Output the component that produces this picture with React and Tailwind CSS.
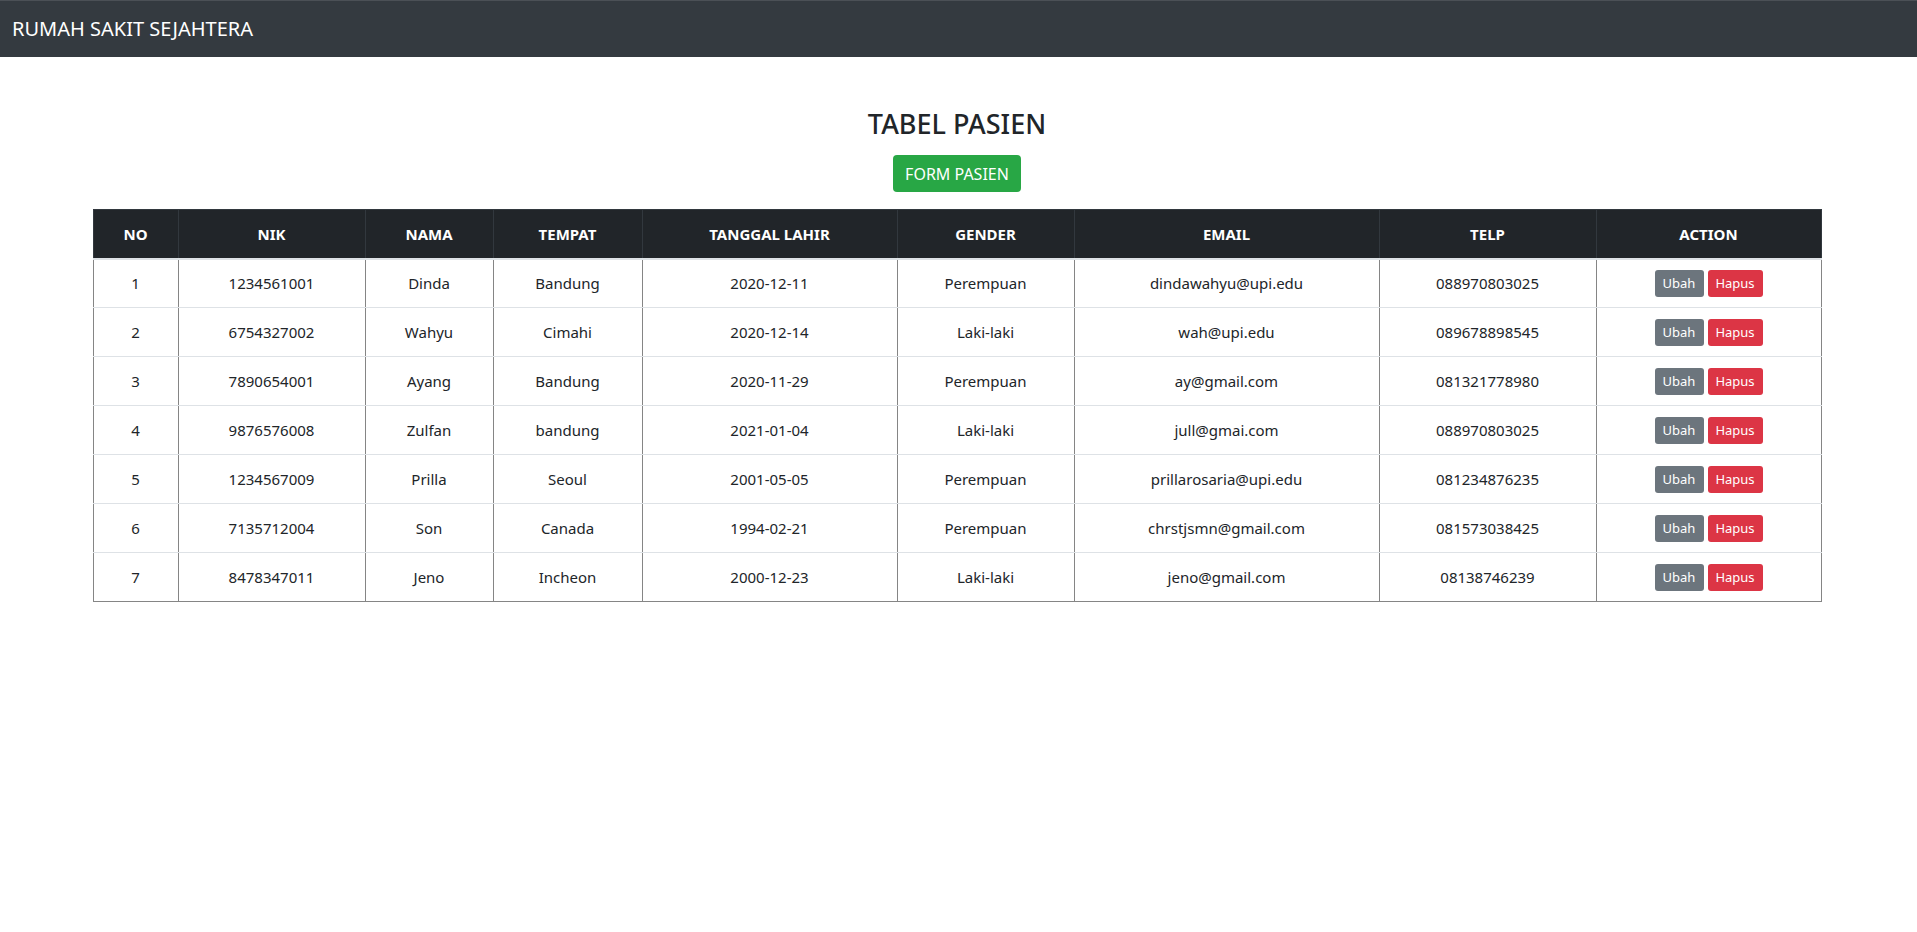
const pasien = [
  { nik: '1234561001', nama: 'Dinda', tempat: 'Bandung', tgl: '2020-12-11', gender: 'Perempuan', email: 'dindawahyu@upi.edu', telp: '088970803025' },
  { nik: '6754327002', nama: 'Wahyu', tempat: 'Cimahi', tgl: '2020-12-14', gender: 'Laki-laki', email: 'wah@upi.edu', telp: '089678898545' },
  { nik: '7890654001', nama: 'Ayang', tempat: 'Bandung', tgl: '2020-11-29', gender: 'Perempuan', email: 'ay@gmail.com', telp: '081321778980' },
  { nik: '9876576008', nama: 'Zulfan', tempat: 'bandung', tgl: '2021-01-04', gender: 'Laki-laki', email: 'jull@gmai.com', telp: '088970803025' },
  { nik: '1234567009', nama: 'Prilla', tempat: 'Seoul', tgl: '2001-05-05', gender: 'Perempuan', email: 'prillarosaria@upi.edu', telp: '081234876235' },
  { nik: '7135712004', nama: 'Son', tempat: 'Canada', tgl: '1994-02-21', gender: 'Perempuan', email: 'chrstjsmn@gmail.com', telp: '081573038425' },
  { nik: '8478347011', nama: 'Jeno', tempat: 'Incheon', tgl: '2000-12-23', gender: 'Laki-laki', email: 'jeno@gmail.com', telp: '08138746239' },
];

const cols = [
  { label: 'NO', w: 'w-[85px]' },
  { label: 'NIK', w: 'w-[187px]' },
  { label: 'NAMA', w: 'w-[128px]' },
  { label: 'TEMPAT', w: 'w-[149px]' },
  { label: 'TANGGAL LAHIR', w: 'w-[255px]' },
  { label: 'GENDER', w: 'w-[177px]' },
  { label: 'EMAIL', w: 'w-[305px]' },
  { label: 'TELP', w: 'w-[217px]' },
  { label: 'ACTION', w: 'w-[225px]' },
];

export default function App() {
  const td = 'h-[49px] px-3 border-x border-x-[#858585] border-b border-b-[#dee2e6] text-center align-middle';
  const tdLast = 'h-[49px] px-3 border-x border-x-[#858585] border-b border-b-[#858585] text-center align-middle';

  return (
    <div className="min-h-screen bg-white text-[#212529] font-['Noto_Sans','Open_Sans',sans-serif] text-base">
      {/* Navbar */}
      <nav className="h-[57px] bg-[#343a40] border-t border-[#4b5056] flex items-center px-3">
        <span className="text-white text-[20px] leading-none">RUMAH SAKIT SEJAHTERA</span>
      </nav>

      <div className="flex flex-col items-center pt-[51px] pl-[93px] pr-[96px]">
        <h3 className="text-[27px] font-medium leading-[1.2]">TABEL PASIEN</h3>
        <button className="mt-[15px] h-[37px] px-3 rounded bg-[#28a745] text-white text-[16px]">
          FORM PASIEN
        </button>

        <table className="mt-[17px] w-[1728px] table-fixed border-collapse border border-[#858585]">
          <colgroup>
            {cols.map((c) => (
              <col key={c.label} className={c.w} />
            ))}
          </colgroup>
          <thead>
            <tr className="bg-[#212529] text-white">
              {cols.map((c) => (
                <th
                  key={c.label}
                  className="h-[49px] px-3 font-bold text-[15px] text-center border border-[#32383e] border-b-2 border-b-[#dee2e6]"
                >
                  {c.label}
                </th>
              ))}
            </tr>
          </thead>
          <tbody className="text-[15px]">
            {pasien.map((p, i) => {
              const c = i === pasien.length - 1 ? tdLast : td;
              return (
                <tr key={p.nik}>
                  <td className={c}>{i + 1}</td>
                  <td className={c}>{p.nik}</td>
                  <td className={c}>{p.nama}</td>
                  <td className={c}>{p.tempat}</td>
                  <td className={c}>{p.tgl}</td>
                  <td className={c}>{p.gender}</td>
                  <td className={c}>{p.email}</td>
                  <td className={c}>{p.telp}</td>
                  <td className={c}>
                    <div className="flex justify-center gap-1">
                      <button className="h-[27px] w-[49px] rounded-[3px] bg-[#6c757d] text-white text-[13px]">Ubah</button>
                      <button className="h-[27px] w-[55px] rounded-[3px] bg-[#dc3545] text-white text-[13px]">Hapus</button>
                    </div>
                  </td>
                </tr>
              );
            })}
          </tbody>
        </table>
      </div>
    </div>
  );
}
